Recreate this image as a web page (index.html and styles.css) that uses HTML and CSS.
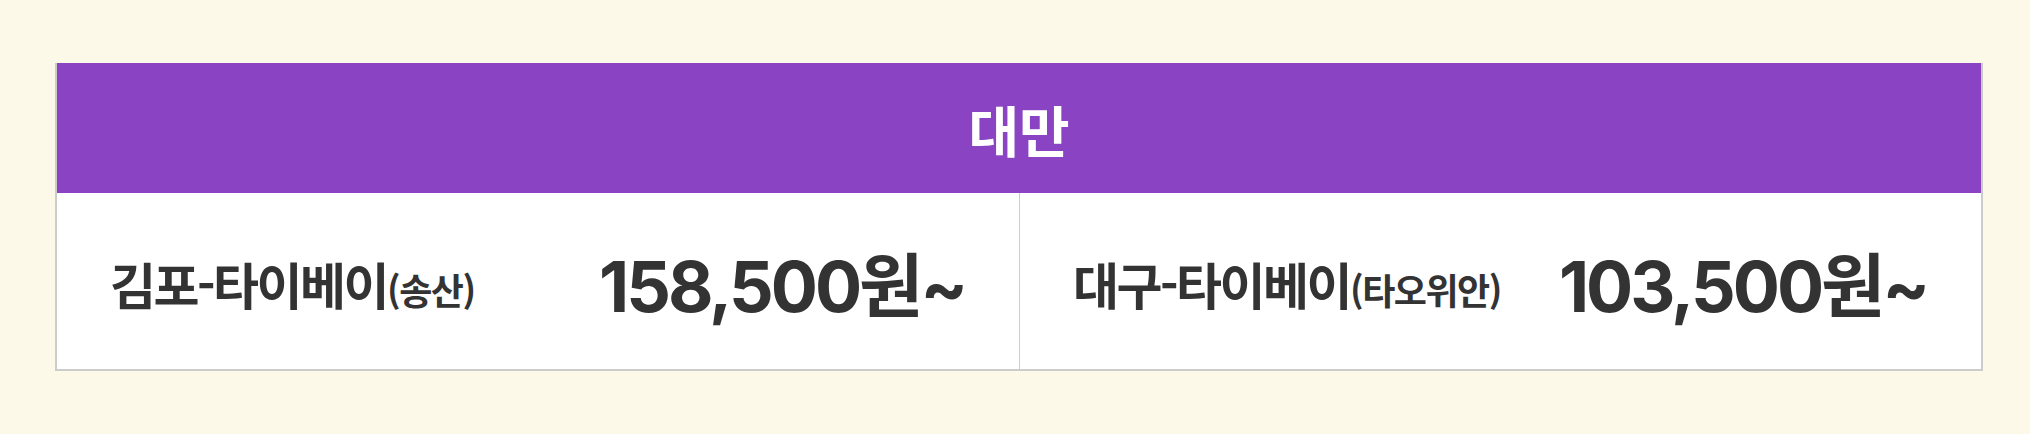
FILE: index.html
```html
<!DOCTYPE html>
<html lang="ko">
<head>
<meta charset="utf-8">
<link rel="stylesheet" href="styles.css">
</head>
<body>
<div class="page">
  <div class="fare-table">
    <div class="fare-head">대만</div>
    <div class="fare-row">
      <div class="fare-cell">
        <div class="route">김포-타이베이<span class="sub">(송산)</span></div>
        <div class="price">158,500원~</div>
      </div>
      <div class="fare-cell">
        <div class="route">대구-타이베이<span class="sub">(타오위안)</span></div>
        <div class="price">103,500원~</div>
      </div>
    </div>
  </div>
</div>
</body>
</html>
```

FILE: styles.css
```css
html, body {
  margin: 0;
  padding: 0;
  background: #fdf9e8;
}
.page {
  padding: 63px 47px 0 55px;
  font-family: Inter, "Noto Sans CJK KR", sans-serif;
  color: #333;
}
.fare-table {
  border: 2px solid #cccccc;
  border-top: none;
  background: #fff;
}
.fare-head {
  background: #8a43c2;
  color: #fff;
  height: 130px;
  display: flex;
  align-items: center;
  justify-content: center;
  font-family: "Noto Sans CJK KR", sans-serif;
  font-weight: 700;
  font-size: 55px;
}
.fare-row {
  display: grid;
  grid-template-columns: 1fr 1fr;
  height: 176px;
}
.fare-cell {
  display: flex;
  align-items: center;
  justify-content: space-between;
  padding: 0 54px 0 53px;
}
.fare-cell + .fare-cell {
  border-left: 1px solid #cccccc;
}
.route {
  font-family: "Noto Sans CJK KR", sans-serif;
  font-weight: 700;
  font-size: 50px;
  letter-spacing: -2.5px;
  padding-top: 4px;
}
.sub {
  font-size: 36px;
  letter-spacing: -1.5px;
}
.price {
  font-family: Inter, "Noto Sans CJK KR", sans-serif;
  font-weight: 700;
  font-size: 70px;
  letter-spacing: -3px;
}
```
